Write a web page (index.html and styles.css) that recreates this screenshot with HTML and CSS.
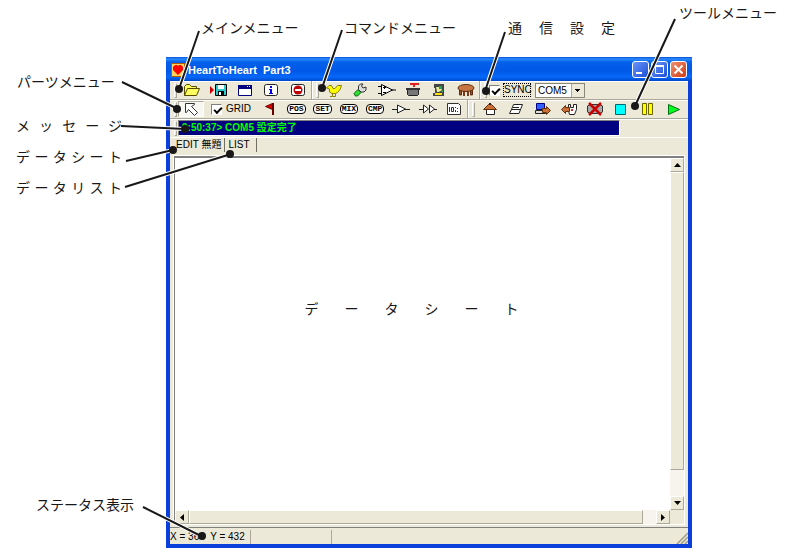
FILE: index.html
```html
<!DOCTYPE html>
<html lang="ja">
<head>
<meta charset="utf-8">
<title>HeartToHeart Part3</title>
<link rel="stylesheet" href="styles.css">
</head>
<body>
<main class="figure">
  <section class="window">
    <header class="titlebar">
      <svg class="app-icon" width="14" height="14" viewBox="0 0 14 14"><path fill="#ffd25a" stroke="#b35a00" d="M.5.5h13v13H.5z"/><path fill="#f00" d="M7 12 2 7V4l2-2h2l1 1 1-1h2l2 2v3z"/></svg>
      <h1 class="title">HeartToHeart&nbsp; Part3</h1>
      <div class="win-buttons">
        <button class="win-btn" aria-label="Minimize"><svg width="15" height="15" viewBox="0 0 15 15"><path fill="#fff" d="M3 10h6v2H3z"/></svg></button>
        <button class="win-btn" aria-label="Maximize"><svg width="15" height="15" viewBox="0 0 15 15"><path fill="none" stroke="#fff" d="M3.500 4v7.500h8V4M3 3.500h9M3 4.500h9"/></svg></button>
        <button class="win-btn close" aria-label="Close"><svg width="15" height="15" viewBox="0 0 15 15"><path stroke="#fff" stroke-width="2" d="m3.500 3.500 8 8m0-8-8 8"/></svg></button>
      </div>
    </header>

    <div class="toolbar">
      <span class="grip"></span>
      <div class="group main-group">
        <button class="tool" aria-label="Open"><svg width="18" height="14" viewBox="0 0 18 14"><path fill="#ffff60" stroke="#554b00" d="M1.500 12.500v-9l2-2h3l2 2h5v2M1.500 12.500l3-7h12l-3 7z"/></svg></button>
        <button class="tool" aria-label="Save"><svg width="18" height="14" viewBox="0 0 18 14"><path fill="#d00000" d="m0 3 4 4-4 4z"/><path fill="#30c8c8" stroke="#000" d="M5.500 1.500h11v11h-11z"/><path fill="#fff" d="M8 2h6v4H8z"/><path d="M8 8h6v4H8z"/><path fill="#fff" d="M9 9h2v3H9z"/></svg></button>
        <button class="tool" aria-label="Window"><svg width="16" height="14" viewBox="0 0 16 14"><path fill="#fff" stroke="#000080" d="M1.500 2.500h13v10h-13z"/><path fill="#000080" d="M1 2h14v4H1z"/><path fill="#fff" d="M10 3h1v1h-1zM12 3h1v1h-1z"/></svg></button>
        <button class="tool" aria-label="Information"><svg width="16" height="14" viewBox="0 0 16 14"><rect x="1.500" y="1.500" width="13" height="11" rx="2" fill="#fff" stroke="#222"/><path fill="#0000e0" d="M7 3h2v2H7zM6 6h3v4h1v1H6v-1h1V7H6z"/></svg></button>
        <button class="tool" aria-label="Stop"><svg width="16" height="14" viewBox="0 0 16 14"><rect x="1.500" y="1.500" width="13" height="11" rx="2" fill="#fff" stroke="#222"/><circle cx="8" cy="7" r="4.500" fill="#c00000"/><path fill="#fff" d="M5 6h6v2H5z"/></svg></button>
      </div>
      <span class="divider"></span><span class="grip"></span>
      <div class="group command-group">
        <button class="tool" aria-label="Bird"><svg width="18" height="14" viewBox="0 0 18 14"><path fill="#ffff00" stroke="#8a8000" d="M1.500 5 4 2.500h2.500l1.500 3h2l2.500-3h4l-1.500 4-2.500 3-2 1H7L4.500 9V6z"/><path fill="none" stroke="#8a8000" d="M7.500 10.500v3H5M10.500 10.500v3H8"/></svg></button>
        <button class="tool" aria-label="Wrench"><svg width="16" height="14" viewBox="0 0 16 14"><path fill="#30e030" stroke="#00600a" d="m2 10.500 4-4 3 3-3.500 3.500H3.500z"/><path fill="#ddd" stroke="#333" d="M6.500 6.500V3l2-2H11L9.500 3l1.500 2 3-1v3l-2 2H9z"/></svg></button>
        <button class="tool" aria-label="Comparator"><svg width="18" height="14" viewBox="0 0 18 14"><path fill="#fff" stroke="#000" d="m3.500 1.500 11 5.500-11 5.500zM0 3.500h4M0 10.500h4M14 7h4M5 4.500h3M6.500 3v3M5 9.500h3"/></svg></button>
        <button class="tool" aria-label="Pot"><svg width="16" height="14" viewBox="0 0 16 14"><path fill="#e02020" d="M5 0h9v2h-4v2H8V2H5z"/><path fill="#777" stroke="#222" d="M2.500 6.500h11v5l-1 1h-9l-1-1z"/><path stroke="#333" stroke-width="2" d="M1 6h14"/></svg></button>
        <button class="tool" aria-label="Mixer"><svg width="16" height="14" viewBox="0 0 16 14"><path fill="#444" d="M3 1h10v12H2v-3h2V5H3z"/><path fill="#e8e8a0" d="M5 4h5l1 3-3 2H6z"/><path fill="#20a050" d="M8 3h3v3H8zM10 7h2v2h-2z"/><path fill="#ffe000" d="M4 10h7v2H4z"/></svg></button>
        <button class="tool" aria-label="Table"><svg width="18" height="14" viewBox="0 0 18 14"><path fill="#9a5228" stroke="#5e2d10" d="M2.500 7h2v5h-2zM13.500 7h2v5h-2z"/><path fill="#7a3c18" d="M6 8h2v5H6zM10 8h2v5h-2z"/><ellipse cx="9" cy="5" rx="8" ry="3.500" fill="#c87544" stroke="#5e2d10"/></svg></button>
      </div>
      <span class="divider"></span><span class="grip"></span>
      <label class="check sync"><input type="checkbox" checked><span class="focus">SYNC</span></label>
      <select class="port" aria-label="Port"><option>COM5</option></select>
    </div>

    <div class="toolbar">
      <span class="grip"></span>
      <button class="tool pressed" aria-label="Select"><svg width="16" height="14" viewBox="0 0 16 14"><path fill="#fff" stroke="#333" d="M2.500 1.500h9v1l-3 2 6 6-3 3-6-6-2 3h-1z"/></svg></button>
      <label class="check"><input type="checkbox" checked><span>GRID</span></label>
      <div class="group wide-group parts">
        <button class="tool" aria-label="Flag"><svg width="12" height="14" viewBox="0 0 12 14"><path fill="#e00000" stroke="#700000" d="M8.500 1.500v6l-7-3z"/><path stroke="#600" stroke-width="2" d="M9 1v12"/></svg></button>
        <button class="tool"><span class="chip">POS</span></button>
        <button class="tool"><span class="chip">SET</span></button>
        <button class="tool"><span class="chip">MIX</span></button>
        <button class="tool"><span class="chip">CMP</span></button>
        <button class="tool" aria-label="Buffer"><svg width="18" height="14" viewBox="0 0 18 14"><path fill="#fff" stroke="#222" d="m5.500 3 8 4-8 4zM0 7.500h5M13 7.500h5"/></svg></button>
        <button class="tool" aria-label="Double buffer"><svg width="18" height="14" viewBox="0 0 18 14"><path fill="#fff" stroke="#222" d="m4.500 3 5 4-5 4zM10.500 3l5 4-5 4zM0 7.500h4M15 7.500h3"/></svg></button>
        <button class="tool" aria-label="Data"><svg width="16" height="14" viewBox="0 0 16 14"><path fill="#fff" stroke="#333" d="M1.500 1.500h11l2 2v9h-13z"/><path fill="none" stroke="#333" d="M3.500 5v5M5.500 5.500h2v4h-2zM9.500 5v1M11.500 6v1M9.500 8v2M11.500 9v1"/></svg></button>
      </div>
      <span class="divider"></span><span class="grip"></span>
      <div class="group wide-group">
        <button class="tool" aria-label="Home"><svg width="16" height="14" viewBox="0 0 16 14"><path fill="#fff" stroke="#222" d="M4.500 7.500h8v5h-8z"/><path fill="#c87038" stroke="#63300c" d="m1.500 7.500 5-5h3l5 5z"/><path fill="#222" d="M7 1h2v2H7z"/></svg></button>
        <button class="tool" aria-label="Erase"><svg width="16" height="14" viewBox="0 0 16 14"><path fill="#fff" stroke="#222" d="M5.500 2.500h9l-2 5h-9zM3.500 7.500h9l-1.500 4H1.500zM5 5.500h6"/></svg></button>
        <button class="tool" aria-label="Send"><svg width="18" height="14" viewBox="0 0 18 14"><path fill="#3060ff" stroke="#000080" d="M2.500 1.500h8v6h-8z"/><path fill="#ddd" stroke="#222" d="M1.500 8.500h10v3h-10z"/><path fill="#c87038" stroke="#63300c" d="M8.500 6.500h4v-2l4 4-4 4v-2h-4z"/></svg></button>
        <button class="tool" aria-label="Receive"><svg width="18" height="14" viewBox="0 0 18 14"><path fill="#fff" stroke="#222" d="M8.500 2.500h2v3h3v-3h3v5l-2 5h-5l-1-4z"/><path fill="#c87038" stroke="#63300c" d="M9.500 5.500h-4v-2l-4 4 4 4v-2h4z"/><path fill="#e02020" d="M11 7h2v2h-2z"/></svg></button>
        <button class="tool" aria-label="Disconnect"><svg width="18" height="14" viewBox="0 0 18 14"><path fill="#aaa" stroke="#333" d="m1.500 4 3-1.500h9l3 1.500v6l-3 1.500h-9l-3-1.500z"/><path stroke="#c80000" stroke-width="2.500" d="m3 1 12 12M15 1 3 13"/></svg></button>
        <button class="tool" aria-label="Halt"><svg width="12" height="14" viewBox="0 0 12 14"><path fill="#00ffff" stroke="#006870" d="M.5 2.500h10v10H.5z"/></svg></button>
        <button class="tool" aria-label="Pause"><svg width="12" height="14" viewBox="0 0 12 14"><path fill="#ffff00" stroke="#6b6200" d="M.5 1.500h4v11h-4zM6.500 1.500h4v11h-4z"/></svg></button>
        <button class="tool" aria-label="Play"><svg width="14" height="14" viewBox="0 0 14 14"><path fill="#00ff20" stroke="#007010" d="m1.500 2.500 11 5-11 5z"/></svg></button>
      </div>
    </div>

    <div class="message-row">
      <span class="grip"></span>
      <output class="message">9:50:37&gt; COM5 設定完了</output>
    </div>

    <nav class="tabs">
      <button class="tab active">EDIT 無題</button>
      <button class="tab">LIST</button>
    </nav>

    <div class="sheet">
      <div class="canvas"><p class="spread sheet-name">データシート</p></div>
      <div class="scroll vertical">
        <button class="arrow" aria-label="Scroll up"><svg width="7" height="4" viewBox="0 0 7 4"><path d="M0 4h7L3.500 0z"/></svg></button>
        <div class="thumb"></div>
        <button class="arrow" aria-label="Scroll down"><svg width="7" height="4" viewBox="0 0 7 4"><path d="M0 0h7L3.500 4z"/></svg></button>
      </div>
      <div class="scroll horizontal">
        <button class="arrow" aria-label="Scroll left"><svg width="4" height="7" viewBox="0 0 4 7"><path d="M4 0v7L0 3.500z"/></svg></button>
        <div class="thumb"></div>
        <button class="arrow" aria-label="Scroll right"><svg width="4" height="7" viewBox="0 0 4 7"><path d="M0 0v7l4-3.500z"/></svg></button>
      </div>
    </div>

    <footer class="status">
      <span class="cell">X = 364&nbsp; Y = 432</span>
      <span class="cell"></span>
      <span class="cell last"></span>
      <svg class="resize" width="12" height="12" viewBox="0 0 12 12"><path stroke="#a09c88" stroke-width="1.500" d="M1 12 12 1M5 12l7-7M9 12l3-3"/></svg>
    </footer>
  </section>

  <svg class="leaders" width="785" height="555" viewBox="0 0 785 555" aria-hidden="true">
    <defs>
      <path id="lines" d="m199 31-20 58M342 30l-20 58M505 32l-20 59M675 19l-40 87M122 82l56 27M121 126l64 3M126 161l47-11M125 187l106-33M143 507l58 29"/>
    </defs>
    <use href="#lines" stroke="#fff" stroke-width="4"/>
    <use href="#lines" stroke="#1a1718" stroke-width="2"/>
    <g fill="#1a1718">
      <circle cx="179" cy="89" r="4"/><circle cx="322" cy="88" r="4"/><circle cx="486" cy="91" r="4"/>
      <circle cx="635" cy="106" r="4"/><circle cx="177" cy="109" r="4"/><circle cx="185" cy="129" r="4"/>
      <circle cx="173" cy="150" r="4"/><circle cx="230" cy="154" r="4"/><circle cx="202" cy="536" r="4"/>
    </g>
  </svg>
  <p class="callout main-menu">メインメニュー</p>
  <p class="callout command-menu">コマンドメニュー</p>
  <p class="callout spread comm">通信設定</p>
  <p class="callout tool-menu">ツールメニュー</p>
  <p class="callout parts-menu">パーツメニュー</p>
  <p class="callout spread message-label">メッセージ</p>
  <p class="callout spread sheet-label">データシート</p>
  <p class="callout spread list-label">データリスト</p>
  <p class="callout status-label">ステータス表示</p>
</main>
</body>
</html>
```
FILE: styles.css
```css
* { box-sizing: border-box; }

body {
  margin: 0;
  background: #fff;
  color: #1a1718;
  font: 14px/20px "Noto Sans CJK JP", sans-serif;
}

p, h1 { margin: 0; }
button, select { border: 0; padding: 0; background: none; color: inherit; font: inherit; }
svg { display: block; flex: none; }

.figure {
  position: relative;
  display: flex;
  min-height: 100vh;
  padding: 57px 93px 7px 166px;
}

.window {
  flex: 1;
  display: flex;
  flex-direction: column;
  border: solid #0a3fdc;
  border-width: 0 4px 4px;
  background: #ece9d8;
  color: #000;
  font: 11px/14px "Liberation Sans", "Noto Sans CJK JP", sans-serif;
}

/* Title bar */
.titlebar {
  display: flex;
  align-items: center;
  gap: 3px;
  height: 24px;
  margin: 0 -4px;
  padding: 1px 5px 0;
  background: linear-gradient(#0a50d8, #2a8cff 2px, #0560ea 5px, #0058e6 14px, #0668fa 20px, #0048c8);
}
.title { flex: 1; color: #fff; font-size: 11px; line-height: 14px; }
.win-buttons { display: flex; gap: 2px; }
.win-btn {
  width: 17px;
  height: 17px;
  border: 1px solid #fff;
  border-radius: 3px;
  background: linear-gradient(135deg, #6a95f8, #1c50d8);
}
.close { background: linear-gradient(135deg, #f09070, #d03c14); }

/* Toolbars */
.toolbar, .message-row {
  display: flex;
  align-items: center;
  height: 19px;
  padding-left: 4px;
  border-bottom: 1px solid #aca899;
  box-shadow: inset 0 1px #fff;
}
.grip {
  flex: none;
  width: 3px;
  height: 15px;
  border: 1px solid;
  border-color: #fff #aca899 #aca899 #fff;
}
.divider {
  flex: none;
  width: 2px;
  height: 18px;
  margin-right: 3px;
  border-left: 1px solid #aca899;
  border-right: 1px solid #fff;
}
.group {
  display: grid;
  grid-auto-flow: column;
  grid-auto-columns: 1fr;
  margin-left: 2px;
}
.main-group { width: 132px; }
.command-group { width: 158px; }
.wide-group { width: 210px; }
.parts { margin-left: 5px; }
.tool { display: flex; align-items: center; justify-content: center; height: 16px; }
.pressed {
  width: 26px;
  margin-left: 1px;
  border: 1px solid;
  border-color: #aca899 #fff #fff #aca899;
  background: #f8f7f2;
}
.chip {
  padding: 0 1px;
  border: 1px solid #000;
  border-radius: 4px;
  background: #fff;
  font: bold 8px/8px "Liberation Mono", monospace;
}
.check { display: flex; align-items: center; gap: 4px; margin-left: 7px; }
.sync { margin-left: 2px; }
.check input {
  appearance: none;
  width: 11px;
  height: 11px;
  margin: 0;
  border: 1px solid;
  border-color: #808080 #fff #fff #808080;
  background: #fff;
}
.check input:checked::before {
  content: "";
  display: block;
  width: 6px;
  height: 3px;
  margin: 2px 0 0 2px;
  border: solid #000;
  border-width: 0 0 2px 2px;
  transform: rotate(-45deg);
}
.check span { width: 26px; font-size: 10px; line-height: 12px; }
.check .focus { outline: 1px dotted #000; }
.port {
  appearance: none;
  width: 50px;
  height: 15px;
  margin-left: 5px;
  padding-left: 2px;
  border: 1px solid #8a8778;
  border-radius: 0;
  background:
    linear-gradient(#000, #000) no-repeat right 4px top 5px / 5px 1px,
    linear-gradient(#000, #000) no-repeat right 5px top 6px / 3px 1px,
    linear-gradient(#000, #000) no-repeat right 6px top 7px / 1px 1px,
    linear-gradient(#ece9d8, #ece9d8) no-repeat right / 12px 100%,
    linear-gradient(#aca899, #aca899) no-repeat right / 13px 100%,
    #fff;
  font-size: 10px;
  line-height: 13px;
}

/* Message line */
.message-row { border-bottom-color: #fff; }
.message {
  width: 442px;
  height: 16px;
  margin-left: 1px;
  padding-left: 3px;
  border: 1px solid;
  border-color: #808080 #fff #fff #808080;
  background: #000080;
  color: #00ff00;
  font-weight: bold;
  font-size: 10px;
  line-height: 14px;
}

/* Tabs */
.tabs { display: flex; align-items: flex-start; height: 18px; padding-left: 5px; font-size: 10px; }
.tab { height: 14px; padding: 0 6px 0 3px; border-right: 1px solid #716f64; }
.tab.active { padding: 0 3px 0 1px; }

/* Data sheet */
.sheet {
  flex: 1;
  display: grid;
  grid-template: 1fr 14px / 1fr 14px;
  margin: 0 4px 3px;
  border: solid #808080;
  border-width: 2px 0 0 1px;
  box-shadow: 0 0 0 1px #fff;
}
.canvas { display: flex; align-items: flex-start; justify-content: center; padding-top: 140px; background: #fff; }
.sheet-name { width: 214px; margin-right: 22px; color: #1a1718; font: 14px/20px "Noto Sans CJK JP", sans-serif; }
.spread { text-align: justify; text-align-last: justify; }
.scroll { display: flex; background: #f6f4ec; }
.vertical { flex-direction: column; }
.arrow, .thumb {
  border: 1px solid;
  border-color: #fff #aca899 #aca899 #fff;
  background: #ece9d8;
}
.arrow { display: flex; align-items: center; justify-content: center; flex: none; width: 14px; height: 14px; }
.thumb { flex: 1; }
.vertical .thumb { margin-bottom: 26px; }
.horizontal .thumb { margin-right: 13px; }

/* Status bar */
.status {
  display: flex;
  align-items: flex-end;
  height: 17px;
  border-top: 1px solid #808080;
  font-size: 10px;
}
.cell { width: 81px; height: 14px; border-right: 1px solid #aca899; white-space: nowrap; }
.last { flex: 1; border: 0; }

/* Callouts over the figure */
.leaders { position: absolute; left: 0; top: 0; fill: none; }
.callout { position: absolute; white-space: nowrap; }
.main-menu { left: 201px; top: 17px; }
.command-menu { left: 344px; top: 17px; }
.comm { left: 508px; top: 17px; width: 107px; }
.tool-menu { left: 679px; top: 2px; }
.parts-menu { left: 17px; top: 71px; }
.message-label { left: 16px; top: 115px; width: 106px; }
.sheet-label { left: 16px; top: 146px; width: 106px; }
.list-label { left: 16px; top: 177px; width: 106px; }
.status-label { left: 36px; top: 494px; }
```
